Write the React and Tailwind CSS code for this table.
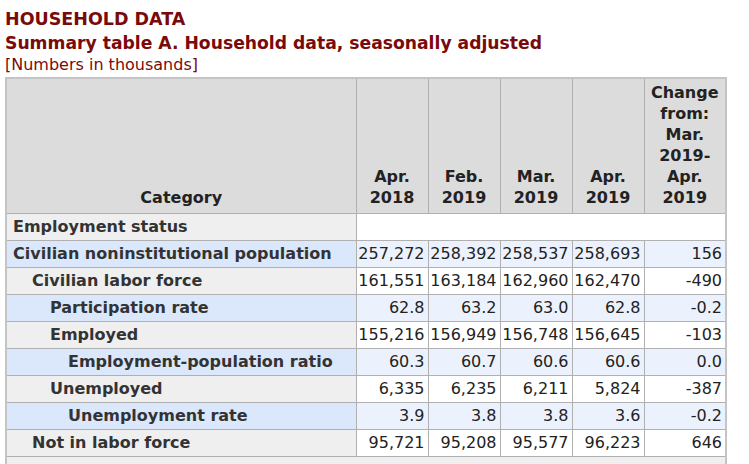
import React from "react";

const rows = [
  { label: "Civilian noninstitutional population", level: 0, blue: true, v: ["257,272", "258,392", "258,537", "258,693", "156"] },
  { label: "Civilian labor force", level: 1, v: ["161,551", "163,184", "162,960", "162,470", "-490"] },
  { label: "Participation rate", level: 2, blue: true, v: ["62.8", "63.2", "63.0", "62.8", "-0.2"] },
  { label: "Employed", level: 2, v: ["155,216", "156,949", "156,748", "156,645", "-103"] },
  { label: "Employment-population ratio", level: 3, blue: true, v: ["60.3", "60.7", "60.6", "60.6", "0.0"] },
  { label: "Unemployed", level: 2, v: ["6,335", "6,235", "6,211", "5,824", "-387"] },
  { label: "Unemployment rate", level: 3, blue: true, v: ["3.9", "3.8", "3.8", "3.6", "-0.2"] },
  { label: "Not in labor force", level: 1, v: ["95,721", "95,208", "95,577", "96,223", "646"] },
];

const indent = ["pl-[6px]", "pl-[25px]", "pl-[43px]", "pl-[61px]"];

export default function App() {
  return (
    <div className="bg-white pl-[5px] pt-[7px] text-[#222] [font-family:'DejaVu_Sans',Verdana,sans-serif]">
      <div className="text-[#7a0a0a] font-bold text-[17.5px] leading-[24px]">HOUSEHOLD DATA</div>
      <div className="text-[#7a0a0a] font-bold text-[17.2px] leading-[24px]">
        Summary table A. Household data, seasonally adjusted
      </div>
      <div className="text-[#7a0a0a] text-[16px] leading-[20px]">[Numbers in thousands]</div>

      <table className="mt-[2px] border-collapse border-2 border-[#c4c4c4] text-[16px] leading-[20px]">
        <thead>
          <tr className="bg-[#dcdcdc] leading-[21px]">
            <th className="w-[350px] h-[135px] border border-[#b0b0b0] align-bottom pb-[5px] font-bold">Category</th>
            {[["Apr.", "2018"], ["Feb.", "2019"], ["Mar.", "2019"], ["Apr.", "2019"]].map(([a, b], i) => (
              <th key={i} className="w-[72px] border border-[#b0b0b0] align-bottom pb-[5px] font-bold">
                {a}
                <br />
                {b}
              </th>
            ))}
            <th className="w-[82px] border border-[#b0b0b0] align-bottom pb-[5px] font-bold">
              Change
              <br />
              from:
              <br />
              Mar.
              <br />
              2019-
              <br />
              Apr.
              <br />
              2019
            </th>
          </tr>
        </thead>
        <tbody>
          <tr className="h-[27px]">
            <th className="text-left pl-[6px] bg-[#efefef] border border-[#b0b0b0] font-bold text-[#333]">
              Employment status
            </th>
            <td colSpan={5} className="bg-white border border-[#b0b0b0]"></td>
          </tr>
          {rows.map((r) => (
            <tr key={r.label} className="h-[27px]">
              <th
                className={`text-left ${indent[r.level]} border border-[#b0b0b0] font-bold text-[#333] ${
                  r.blue ? "bg-[#dbe7fb]" : "bg-[#efefef]"
                }`}
              >
                {r.label}
              </th>
              {r.v.map((x, i) => (
                <td
                  key={i}
                  className={`text-right pr-[3px] border border-[#b0b0b0] whitespace-nowrap ${
                    r.blue ? "bg-[#ecf2fd]" : "bg-white"
                  }`}
                >
                  {x}
                </td>
              ))}
            </tr>
          ))}
          <tr className="h-[27px]">
            <td colSpan={6} className="bg-[#efefef] border border-[#b0b0b0]"></td>
          </tr>
        </tbody>
      </table>
    </div>
  );
}
